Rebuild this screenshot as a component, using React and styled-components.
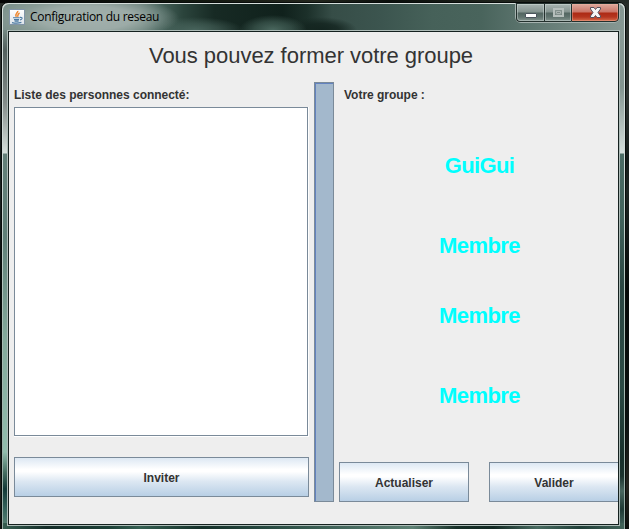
import React from "react";
import styled, { createGlobalStyle } from "styled-components";

const GlobalStyle = createGlobalStyle`
  body { margin: 0; overflow: hidden; background: #0a100f; }
  * { box-sizing: border-box; }
`;

const Desktop = styled.div`
  width: 629px;
  height: 529px;
  overflow: hidden;
  padding: 2px 3px 0 1px;
  background:
    linear-gradient(90deg, #050606 0, #11170f 30%, #24271e 50%, #0b0f0c 62%, #20251e 80%, #242a26 100%) top / 100% 3px no-repeat,
    linear-gradient(180deg, #272c28 0, #2c322f 18%, #141c1a 30%, #1d2523 36%, #050908 55%, #0b1211 80%, #25251f 92%, #0d100e 100%);
`;

const Window = styled.div`
  width: 625px;
  height: 540px;
  border: 1px solid #080c0b;
  border-radius: 7px 7px 0 0;
  padding: 1px;
  background: linear-gradient(180deg, #d5dedb 0, #cfdad7 30%, #a9bdb5 60%, #96aaa3 100%);
`;

const Glass = styled.div`
  height: 100%;
  border-radius: 6px 6px 0 0;
  padding: 0 4px;
  background:
    radial-gradient(ellipse 92px 24px at 84px 14px, #a3b1ad 0, #9caba7 50%, #8fa19c99 75%, #8fa19c00 100%) 0 0 / 100% 26px no-repeat,
    linear-gradient(27deg, #45605900 0, #45605900 100%) 0 0 / 100% 26px no-repeat,
    radial-gradient(ellipse 34px 15px at 270px 26px, #4a675e 0, #45625999 55%, #42605600 100%) 0 0 / 100% 26px no-repeat,
    radial-gradient(ellipse 48px 13px at 192px 26px, #47635b 0, #47635b99 50%, #42605600 100%) 0 0 / 100% 26px no-repeat,
    radial-gradient(ellipse 36px 13px at 318px 26px, #13241f 0, #13241fcc 50%, #13241f00 100%) 0 0 / 100% 26px no-repeat,
    linear-gradient(90deg, #7c918c 0, #83968f 12%, #647c75 22%, #49655d 25%, #2b443c 29%, #172a24 34%, #10211c 45%, #1c302a 49%, #364d47 53%, #3c554f 61%, #466159 69%, #49645c 77%, #647b75 87%, #879893 100%) 0 0 / 100% 26px no-repeat,
    linear-gradient(180deg, #7b908a 0, #53615e 23px, #848d8a 76px, #d5dfdb 126px, #638079 127px, #608078 210px, #83a99b 310px, #91bdad 425px, #456d61 446px, #143a38 462px, #38665e 483px, #527c70 100%) 0 26px / 4px 496px no-repeat,
    linear-gradient(180deg, #8a9b96 0, #82948f 60px, #d5dfdc 126px, #4b6c65 127px, #42645d 190px, #2a4642 260px, #2b4b45 360px, #17302b 430px, #1b332e 449px, #49675f 464px, #1e3934 482px, #3b5b54 100%) right 26px / 4px 496px no-repeat,
    linear-gradient(90deg, #365e51 0, #142d28 7%, #1c4037 17%, #356052 22%, #143029 32%, #294c43 43%, #5d8174 66%, #173028 73%, #122923 79%, #486b61 86%, #203f38 93%, #416359 100%) bottom / 100% 18px no-repeat;
  background-position: 0 0, 0 0, 0 0, 0 0, 0 0, 0 0, 0 23px, right 23px, bottom;
`;

const TitleBar = styled.header`
  height: 26px;
  display: flex;
  align-items: flex-start;
  padding-left: 2px;
`;

const AppIcon = styled.svg`
  width: 16px;
  height: 16px;
  margin-top: 5px;
  flex: none;
`;

const WindowTitle = styled.h1`
  margin: 4px auto 0 5px;
  font: 400 12px/18px "Open Sans", "Noto Sans", sans-serif;
  letter-spacing: -0.28px;
  color: #000;
  white-space: nowrap;
`;

const Controls = styled.div`
  display: flex;
  width: 105px;
  height: 20px;
  margin: -1px 0 0;
  padding: 0 1px 1px;
  border-radius: 0 0 6px 6px;
  background: #a6b2af;
`;

const ControlButton = styled.button`
  width: ${({ $width }) => $width}px;
  height: 19px;
  padding: 0;
  border: 1px solid #23302d;
  border-right-width: ${({ $close }) => ($close ? 1 : 0)}px;
  border-radius: ${({ $first, $close }) => ($first ? "0 0 0 4px" : $close ? "0 0 4px 0" : "0")};
  background: ${({ $close }) => $close
    ? "linear-gradient(180deg, #dfaa9e 0, #cb7567 8px, #ad2a14 9px, #b53620 13px, #d76b49 17px)"
    : "linear-gradient(180deg, #a9b5b2 0, #84938f 8px, #536661 9px, #60736e 13px, #84948e 17px)"};
  box-shadow: inset 0 0 0 1px ${({ $close }) => ($close ? "#f1b6a36b" : "#d5dfdc78")};
  display: block;
`;

const ControlGlyph = styled.svg`
  display: block;
  width: 100%;
  height: 17px;
`;

const Client = styled.main`
  width: 613px;
  height: 496px;
  border: 1px solid #adbbb7;
  padding: 1px;
  background: #15211f;
`;

const Panel = styled.div`
  width: 609px;
  height: 492px;
  overflow: hidden;
  background: #eee;
  color: #333;
  font-family: "Liberation Sans", Arial, sans-serif;
`;

const Heading = styled.h2`
  margin: 0;
  height: 50px;
  padding: 10px 0 0 140px;
  font-size: 22px;
  font-weight: 400;
  line-height: 28px;
  letter-spacing: -0.04px;
  white-space: nowrap;
`;

const Columns = styled.div`
  display: grid;
  grid-template-columns: 295px 20px 279px;
  column-gap: 5px;
  padding-left: 5px;
  height: 420px;
`;

const Column = styled.section`
  display: flex;
  flex-direction: column;
  min-width: 0;
`;

const Label = styled.h3`
  margin: 0;
  height: 25px;
  padding-left: ${({ $indent }) => $indent || 0}px;
  font-size: 12px;
  font-weight: 700;
  line-height: 26px;
  letter-spacing: -0.02px;
  white-space: nowrap;
`;

const ListFrame = styled.div`
  height: 330px;
  border: solid #fff;
  border-width: 0 1px 1px 0;
`;

const List = styled.div`
  height: 329px;
  border: 1px solid #7a8a99;
  background: #fff;
`;

const Divider = styled.div`
  background: #a3b8cc;
  border: 1px solid #7a8a99;
  box-shadow: inset 1px 1px 0 #6382bf;
`;

const Button = styled.button`
  flex: none;
  width: ${({ $width }) => $width}px;
  height: 40px;
  margin-top: ${({ $top }) => $top || 0}px;
  padding: 2px 0 0;
  border: 1px solid #7a8a99;
  border-radius: 0;
  background: linear-gradient(180deg, #dde8f3 0, #fff 30%, #fff 36%, #dce7f2 62%, #b8cfe5 100%);
  color: #333;
  font: 700 12px/14px "Liberation Sans", Arial, sans-serif;
`;

const Members = styled.ul`
  list-style: none;
  margin: 0;
  padding: 45px 0 0;
  height: 355px;
  display: grid;
  grid-template-rows: 80px 70px 80px 28px;
  width: 281px;
`;

const Member = styled.li`
  color: #0ff;
  font-size: 22px;
  font-weight: 700;
  line-height: 28px;
  letter-spacing: -0.6px;
  text-align: center;
`;

const Actions = styled.div`
  display: flex;
  gap: 20px;
`;

const members = ["GuiGui", "Membre", "Membre", "Membre"];

function JavaIcon() {
  return (
    <AppIcon viewBox="0 0 16 16">
      <defs>
        <linearGradient id="tile" x1="0" y1="0" x2="0" y2="1">
          <stop offset="0" stopColor="#fff" />
          <stop offset="1" stopColor="#dce3ea" />
        </linearGradient>
      </defs>
      <rect x=".5" y=".5" width="15" height="15" fill="url(#tile)" stroke="#8194a6" />
      <path d="M8.8 1.8C9.1 4 5.3 4.8 7.3 7.8M10.6 4C8 5.2 9.6 6.1 8.4 7.8" fill="none" stroke="#ee8a35" strokeWidth="1.5" />
      <path d="M4 8.7h6.7M5 10.6h5M5.6 12.1h4M3 13.6q5 1.2 9.4-.2M11 8.4q2.8-.2 1.9 1.4-.6.9-2 1.2" fill="none" stroke="#4c7ba2" strokeWidth="1.15" />
    </AppIcon>
  );
}

function WindowControls() {
  return (
    <Controls>
      <ControlButton $width={28} $first aria-label="Réduire">
        <ControlGlyph viewBox="0 0 27 17">
          <rect x="8.5" y="9.5" width="11" height="4" rx=".5" fill="#fff" stroke="#4b555d" />
        </ControlGlyph>
      </ControlButton>
      <ControlButton $width={27} aria-label="Agrandir">
        <ControlGlyph viewBox="0 0 26 17">
          <path d="M9 5h9v7H9z" fill="none" stroke="#b6bfbc" strokeWidth="2" />
          <path d="M10.5 6.5h6v4h-6z" fill="none" stroke="#82908c" />
          <path d="M11.5 7.5h4v2h-4z" fill="#7c8985" stroke="#aab4b1" />
        </ControlGlyph>
      </ControlButton>
      <ControlButton $width={48} $close aria-label="Fermer">
        <ControlGlyph viewBox="0 0 46 17">
          <path d="M18.5 3.5h3.5l1.5 2 1.5-2h3.5v1.5l-2.5 3.5 2.5 3.5v1.5h-3.5l-1.5-2-1.5 2h-3.5v-1.5l2.5-3.5-2.5-3.5z" fill="#f5f5f5" stroke="#57505c" />
        </ControlGlyph>
      </ControlButton>
    </Controls>
  );
}

export default function App() {
  return (
    <>
      <GlobalStyle />
      <Desktop>
        <Window>
          <Glass>
            <TitleBar>
              <JavaIcon />
              <WindowTitle>Configuration du reseau</WindowTitle>
              <WindowControls />
            </TitleBar>
            <Client>
              <Panel>
                <Heading>Vous pouvez former votre groupe</Heading>
                <Columns>
                  <Column>
                    <Label>Liste des personnes connecté:</Label>
                    <ListFrame><List /></ListFrame>
                    <Button $width={295} $top={20}>Inviter</Button>
                  </Column>
                  <Divider />
                  <Column>
                    <Label $indent={5}>Votre groupe :</Label>
                    <Members>
                      {members.map((name, index) => <Member key={index}>{name}</Member>)}
                    </Members>
                    <Actions>
                      <Button $width={130}>Actualiser</Button>
                      <Button $width={130}>Valider</Button>
                    </Actions>
                  </Column>
                </Columns>
              </Panel>
            </Client>
          </Glass>
        </Window>
      </Desktop>
    </>
  );
}
